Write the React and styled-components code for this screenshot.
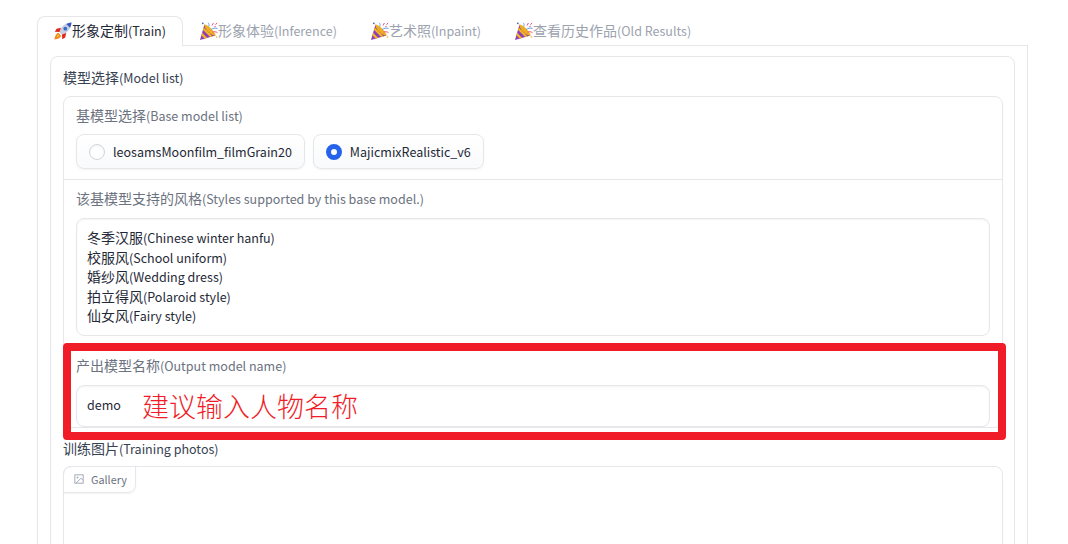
import React from 'react'
import styled, { createGlobalStyle } from 'styled-components'

const Global = createGlobalStyle`
  html, body { margin: 0; background: #fff; }
  body { font-family: "Noto Sans CJK SC", sans-serif; font-size: 14px; color: #1f2937; }
  * { box-sizing: border-box; }
`

const Page = styled.div`
  height: 544px;
  overflow: hidden;
  padding: 16px 40px 0 37px;
`

const TabBar = styled.div`
  display: flex;
  height: 30px;
  border-bottom: 1px solid #e5e7eb;
`

const Tab = styled.div`
  display: flex;
  align-items: center;
  height: 30px;
  padding: 0 16px 2px;
  line-height: 20px;
  color: ${p => (p.$active ? '#1f2937' : '#9ca3af')};
  background: ${p => (p.$active ? '#fff' : 'transparent')};
  border: 1px solid ${p => (p.$active ? '#e5e7eb' : 'transparent')};
  border-bottom: none;
  border-radius: 8px 8px 0 0;
  svg { flex: none; width: 18px; height: 18px; margin-top: 1px; }
`

const Panel = styled.div`
  height: 600px;
  padding: 10px 12px;
  border: 1px solid #e5e7eb;
  border-top: none;
`

const Card = styled.div`
  height: 600px;
  padding: 12px 12px 0;
  border: 1px solid #e5e7eb;
  border-radius: 8px;
`

const Title = styled.div`
  height: 18px;
  line-height: 16px;
  color: #374151;
`

const Group = styled.div`
  margin-top: 9px;
  border: 1px solid #e5e7eb;
  border-radius: 8px;
  width: 940px;
`

const Section = styled.div`
  position: relative;
  padding: 0 12px;
  height: ${p => p.$height}px;
  padding-top: ${p => p.$top || 10}px;
  border-bottom: ${p => (p.$divider ? '1px solid #e5e7eb' : 'none')};
`

const Label = styled.div`
  height: 18px;
  line-height: 16px;
  color: #6b7280;
`

const Radios = styled.div`
  display: flex;
  gap: 8px;
  margin-top: 9px;
`

const Radio = styled.label`
  display: flex;
  align-items: center;
  height: 35px;
  padding: 0 12px;
  gap: 8px;
  line-height: 20px;
  color: #1f2937;
  border: 1px solid #e5e7eb;
  border-radius: 8px;
  background: linear-gradient(#fff, #f9fafb);
  box-shadow: 0 1px 2px rgba(0, 0, 0, 0.05);
`

const Dot = styled.span`
  flex: none;
  width: 16px;
  height: 16px;
  border-radius: 50%;
  border: ${p => (p.$on ? '5px solid #2563eb' : '1px solid #d1d5db')};
  background: #fff;
  box-shadow: inset 0 1px 2px rgba(0, 0, 0, 0.05);
`

const TextBox = styled.div`
  margin-top: 10px;
  padding: ${p => (p.$single ? '0 10px 2px' : '9px 10px')};
  height: ${p => p.$height}px;
  line-height: 19.6px;
  color: #1f2937;
  border: 1px solid #e5e7eb;
  border-radius: 8px;
  box-shadow: inset 0 1px 2px rgba(0, 0, 0, 0.05);
  display: ${p => (p.$single ? 'flex' : 'block')};
  align-items: center;
`

const Line = styled.div``

// latin runs are narrower than the CJK face's own latin at the same size
const Latin = styled.span`
  font-size: 12.53px;
`

const GalleryTitle = styled(Title)`
  margin-top: 12px;
`

const GalleryBox = styled.div`
  margin-top: 8px;
  width: 940px;
  height: 200px;
  border: 1px solid #e5e7eb;
  border-radius: 8px;
`

const GalleryTag = styled.div`
  display: flex;
  align-items: center;
  gap: 7px;
  width: 73px;
  height: 27px;
  margin: -1px 0 0 -1px;
  padding: 0 0 2px 10px;
  font-size: 10.8px;
  color: #6b7280;
  border: 1px solid #e5e7eb;
  border-radius: 8px 0 8px 0;
  box-shadow: 0 1px 2px rgba(0, 0, 0, 0.05);
  svg { flex: none; }
`

// red marker drawn over the screenshot content
const Marker = styled.div`
  position: absolute;
  left: -1px;
  top: -2px;
  width: 943px;
  height: 97px;
  border: 8px solid #f01c27;
  border-radius: 4px;
  pointer-events: none;
`

const Hint = styled.div`
  position: absolute;
  left: 78px;
  top: 43px;
  font-size: 27px;
  font-weight: 300;
  line-height: 36px;
  color: #f01c27;
  pointer-events: none;
`

const Rocket = () => (
  <svg viewBox="0 0 18 18">
    <path d="M17.500.5c-4.500.2-8 2.200-10.500 5.500l-2.200 3.700 3.500 3.500 3.700-2.200c3.300-2.500 5.300-6 5.500-10.500z" fill="#c9cfe0" />
    <path d="M17.500.5c-1.800.1-3.600.6-5.200 1.400l3.800 3.800c.8-1.600 1.300-3.400 1.400-5.200z" fill="#3557c4" />
    <circle cx="11.300" cy="6.700" r="1.900" fill="#2f6fd0" />
    <path d="M7 5.800 2.600 6.800.8 9.800l4.600.2zM12.200 11 11.200 15.400l-3 1.800-.2-4.600z" fill="#e0281f" />
    <path d="M4.300 10.800C2.400 11.500 1 13.500.4 17.600c4.100-.6 6.100-2 6.800-3.900z" fill="#f08a1d" />
    <path d="M4.500 12.800c-.9.400-1.500 1.400-1.800 2.500 1.100-.3 2-.9 2.500-1.800z" fill="#ffd83b" />
  </svg>
)

const Popper = () => (
  <svg viewBox="0 0 18 18">
    <path d="M4.500 2.500 0 18l15.500-4.500z" fill="#8e3fb5" />
    <path d="M3.700 5.500 12.600 14.400l-2.400.7-7.300-7.300zM2.100 10.800l5.100 5.100-2.500.7-3.300-3.300z" fill="#f5b81f" />
    <path d="M4.500 2.500c1.600 0 4.500 1.800 6.800 4.200s4.700 5.700 4.200 6.800c-1.200.7-4.800-.9-7.200-3.400S3.700 3.400 4.500 2.500z" fill="#f0ad1f" />
    <path d="M11 7.500c2-1.300 4.300-1.800 6.500-1M8.800 4.500C9.300 3 9.100 1.800 8.200.8" fill="none" stroke="#5b9ee8" strokeWidth="1" />
    <path d="M12 3.500 13.400 1M15.500 2.800 17 .8M12.500 10c1.800-.5 3.500-.3 5 .7" fill="none" stroke="#e8557e" strokeWidth="1" />
    <circle cx="2.800" cy="1.300" r=".9" fill="#3f63c9" />
    <circle cx="15" cy="4.500" r=".7" fill="#e8557e" />
    <circle cx="16.500" cy="15" r=".8" fill="#e8b21e" />
  </svg>
)

const ImageIcon = () => (
  <svg width="10" height="10" viewBox="0 0 24 24" fill="none" stroke="#9ca3af" strokeWidth="2.200">
    <rect x="2" y="2" width="20" height="20" />
    <circle cx="8.500" cy="8.500" r="1.500" />
    <path d="M22 15l-5-5L5 22" />
  </svg>
)

// wraps the ascii parts of a mixed label
const Txt = ({ children }) => (
  <span>
    {children.split(/([\x00-\x7f]+)/).filter(Boolean).map((part, i) =>
      /^[\x00-\x7f]/.test(part) ? <Latin key={i}>{part}</Latin> : part
    )}
  </span>
)

const styles = [
  '冬季汉服(Chinese winter hanfu)',
  '校服风(School uniform)',
  '婚纱风(Wedding dress)',
  '拍立得风(Polaroid style)',
  '仙女风(Fairy style)',
]

const App = () => (
  <Page>
    <Global />
    <TabBar>
      <Tab $active><Rocket /><Txt>形象定制(Train)</Txt></Tab>
      <Tab><Popper /><Txt>形象体验(Inference)</Txt></Tab>
      <Tab><Popper /><Txt>艺术照(Inpaint)</Txt></Tab>
      <Tab><Popper /><Txt>查看历史作品(Old Results)</Txt></Tab>
    </TabBar>
    <Panel>
      <Card>
        <Title><Txt>模型选择(Model list)</Txt></Title>
        <Group>
          <Section $height={83} $divider>
            <Label><Txt>基模型选择(Base model list)</Txt></Label>
            <Radios>
              <Radio><Dot /><Txt>leosamsMoonfilm_filmGrain20</Txt></Radio>
              <Radio><Dot $on /><Txt>MajicmixRealistic_v6</Txt></Radio>
            </Radios>
          </Section>
          <Section $height={165} $top={10}>
            <Label><Txt>该基模型支持的风格(Styles supported by this base model.)</Txt></Label>
            <TextBox $height={118}>
              {styles.map(s => <Line key={s}><Txt>{s}</Txt></Line>)}
            </TextBox>
          </Section>
          <Section $height={82} $top={12}>
            <Label><Txt>产出模型名称(Output model name)</Txt></Label>
            <TextBox $single $height={42}><Txt>demo</Txt></TextBox>
            <Marker />
            <Hint>建议输入人物名称</Hint>
          </Section>
        </Group>
        <GalleryTitle><Txt>训练图片(Training photos)</Txt></GalleryTitle>
        <GalleryBox>
          <GalleryTag><ImageIcon />Gallery</GalleryTag>
        </GalleryBox>
      </Card>
    </Panel>
  </Page>
)

export default App
